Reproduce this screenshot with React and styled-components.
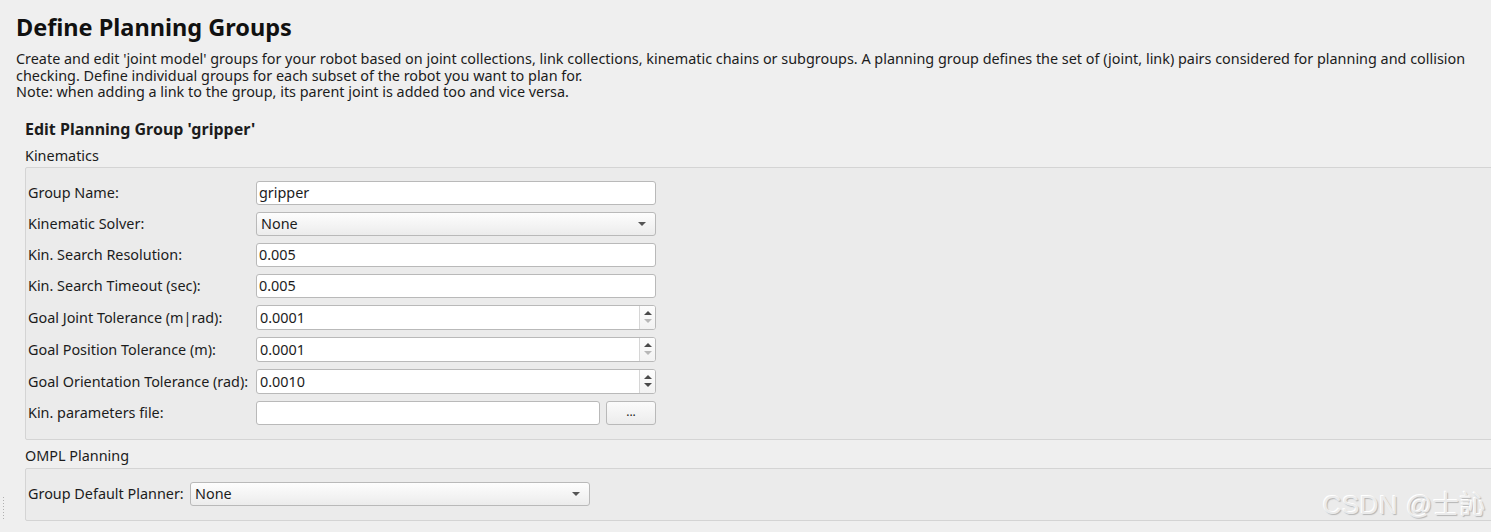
import React from "react";
import styled, { createGlobalStyle } from "styled-components";

const Global = createGlobalStyle`
  html, body { margin: 0; padding: 0; background: #efefef; overflow: hidden; }
  body { font-family: "Noto Sans", "Open Sans", sans-serif; color: #1c1c1c; }
`;

const Page = styled.div`
  position: relative;
  width: 1491px;
  height: 532px;
  box-sizing: border-box;
  padding: 12px 0 0 16px;
  overflow: hidden;
`;

const Title = styled.h1`
  margin: 0;
  font-size: 23.5px;
  font-weight: 700;
  line-height: 30px;
  color: #111;
`;

const Desc = styled.div`
  margin-top: 9px;
  font-size: 14.4px;
  line-height: 16.5px;
  white-space: nowrap;
`;

const Section = styled.div`
  margin: 18px 0 0 9px;
`;

const SubTitle = styled.div`
  font-size: 16px;
  font-weight: 700;
  line-height: 20px;
`;

const BoxLabel = styled.div`
  margin-top: ${(p) => p.$top}px;
  font-size: 14.4px;
  line-height: 18px;
`;

const GroupBox = styled.div`
  margin-top: ${(p) => p.$top}px;
  margin-right: -20px;
  border: 1px solid #d4d4d4;
  border-radius: 2px;
  background: #ebebeb;
  padding: ${(p) => p.$pad};
  display: flex;
  flex-direction: column;
  gap: 7px;
`;

const Row = styled.div`
  display: grid;
  grid-template-columns: ${(p) => p.$label}px 400px;
  align-items: center;
  height: ${(p) => p.$h || 24}px;
`;

const Label = styled.div`
  font-size: 14.4px;
  white-space: nowrap;
`;

const Field = styled.div`
  box-sizing: border-box;
  height: ${(p) => p.$h || 24}px;
  width: ${(p) => p.$w || 400}px;
  background: #fff;
  border: 1px solid #b9b9b9;
  border-radius: 3px;
  display: flex;
  align-items: center;
  font-size: 14.4px;
  padding-left: ${(p) => p.$pl || 2}px;
  overflow: hidden;
`;

const FieldText = styled.span`
  flex: 1;
`;

const Combo = styled(Field)`
  background: linear-gradient(#fdfdfd, #ececec);
  padding-left: 4px;
  padding-right: 9px;
`;

const Arrow = styled.span`
  width: 0;
  height: 0;
  border-left: 4px solid transparent;
  border-right: 4px solid transparent;
  border-top: 4px solid #555;
`;

const SpinCol = styled.div`
  width: 15px;
  align-self: stretch;
  border-left: 1px solid #d6d6d6;
  background: linear-gradient(#fdfdfd, #f2f2f2);
  display: flex;
  flex-direction: column;
  align-items: center;
  justify-content: center;
  gap: 4px;
`;

const Tri = styled.span`
  width: 0;
  height: 0;
  border-left: 4px solid transparent;
  border-right: 4px solid transparent;
  ${(p) =>
    p.$up
      ? `border-bottom: 4px solid ${p.$dim ? "#b8b8b8" : "#4a4a4a"};`
      : `border-top: 4px solid ${p.$dim ? "#b8b8b8" : "#4a4a4a"};`}
`;

const FileWrap = styled.div`
  display: flex;
  gap: 6px;
`;

const Btn = styled.div`
  box-sizing: border-box;
  width: 50px;
  height: 24px;
  border: 1px solid #b9b9b9;
  border-radius: 3px;
  background: linear-gradient(#fbfbfb, #ececec);
  font-size: 12px;
  display: flex;
  align-items: center;
  justify-content: center;
  padding-bottom: 2px;
`;

const Grip = styled.div`
  position: absolute;
  left: 3px;
  top: 497px;
  width: 1px;
  height: 24px;
  background-image: linear-gradient(#b0b0b0 50%, transparent 50%);
  background-size: 1px 3px;
`;

const Watermark = styled.div`
  position: absolute;
  right: 5px;
  bottom: 11px;
  font-family: "Liberation Sans", "Noto Sans CJK SC", sans-serif;
  font-size: 26px;
  color: #ebebeb;
  text-shadow: -1px -1px 0 #ffffff, 1px 1px 1px #b5b5b5;
  letter-spacing: 0.5px;
`;

function Spin({ value, dimDown }) {
  return (
    <Field $h={25} $pl={3}>
      <FieldText>{value}</FieldText>
      <SpinCol>
        <Tri $up />
        <Tri $dim={dimDown} />
      </SpinCol>
    </Field>
  );
}

export default function App() {
  return (
    <Page>
      <Global />
      <Title>Define Planning Groups</Title>
      <Desc>
        Create and edit 'joint model' groups for your robot based on joint collections, link collections, kinematic chains or subgroups. A planning group defines the set of (joint, link) pairs considered for planning and collision
        <br />
        checking. Define individual groups for each subset of the robot you want to plan for.
        <br />
        Note: when adding a link to the group, its parent joint is added too and vice versa.
      </Desc>
      <Section>
        <SubTitle>Edit Planning Group 'gripper'</SubTitle>
        <BoxLabel $top={8}>Kinematics</BoxLabel>
        <GroupBox $top={2} $pad="13px 0 14px 2px">
          <Row $label={228}>
            <Label>Group Name:</Label>
            <Field>gripper</Field>
          </Row>
          <Row $label={228}>
            <Label>Kinematic Solver:</Label>
            <Combo>
              <FieldText>None</FieldText>
              <Arrow />
            </Combo>
          </Row>
          <Row $label={228}>
            <Label>Kin. Search Resolution:</Label>
            <Field>0.005</Field>
          </Row>
          <Row $label={228}>
            <Label>Kin. Search Timeout (sec):</Label>
            <Field>0.005</Field>
          </Row>
          <Row $label={228} $h={25}>
            <Label>Goal Joint Tolerance (m|rad):</Label>
            <Spin value="0.0001" dimDown />
          </Row>
          <Row $label={228} $h={25}>
            <Label>Goal Position Tolerance (m):</Label>
            <Spin value="0.0001" dimDown />
          </Row>
          <Row $label={228} $h={25}>
            <Label>Goal Orientation Tolerance (rad):</Label>
            <Spin value="0.0010" />
          </Row>
          <Row $label={228}>
            <Label>Kin. parameters file:</Label>
            <FileWrap>
              <Field $w={344} />
              <Btn>...</Btn>
            </FileWrap>
          </Row>
        </GroupBox>
        <BoxLabel $top={7}>OMPL Planning</BoxLabel>
        <GroupBox $top={3} $pad="13px 0 14px 2px">
          <Row $label={162}>
            <Label>Group Default Planner:</Label>
            <Combo>
              <FieldText>None</FieldText>
              <Arrow />
            </Combo>
          </Row>
        </GroupBox>
      </Section>
      <Grip />
      <Watermark>CSDN @士訫</Watermark>
    </Page>
  );
}
